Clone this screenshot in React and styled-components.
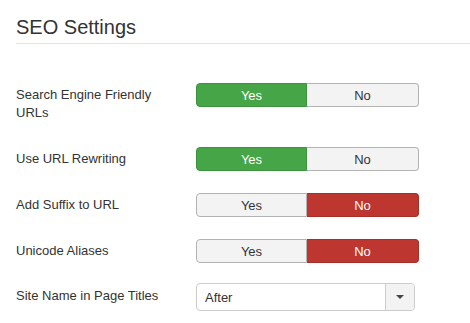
import React from 'react'
import styled, { createGlobalStyle } from 'styled-components'

/*
=============================
styled Components
=============================
*/

const GlobalStyle = createGlobalStyle`
    body {
        margin: 0;
        background: #fff;
        font-family: "Liberation Sans", Arial, sans-serif;
        color: #333;
    }
`
const Page = styled.div`
    padding-left: 16px;
`
const Title = styled.h2`
    margin: 14px 0 0;
    padding-bottom: 3px;
    font-size: 20px;
    line-height: 26px;
    font-weight: 400;
    color: #333;
    border-bottom: 1px solid #e3e3e3;
`
const Form = styled.div`
    display: flex;
    flex-direction: column;
    gap: 22px;
    margin-top: 39px;
`
const Row = styled.div`
    display: flex;
    align-items: flex-start;
    margin-top: ${p => p.$shift || 0}px;
`
const Label = styled.div`
    width: 160px;
    margin-right: 20px;
    flex: none;
    font-size: 13px;
    line-height: 18px;
    padding: ${p => p.$top || 3}px 0 3px;
    color: #333;
`
const Toggle = styled.div`
    display: grid;
    grid-template-columns: 111px 112px;
    height: 24px;
`
const Choice = styled.div`
    display: flex;
    align-items: center;
    justify-content: center;
    font-size: 13px;
    color: ${p => (p.$on ? '#fff' : '#333')};
    background: ${p => (p.$on ? p.$color : '#f3f3f3')};
    border: 1px solid ${p => (p.$on ? p.$edge : '#b3b3b3')};
    border-left-width: ${p => (p.$first ? 1 : 0)}px;
    border-radius: ${p => (p.$first ? '4px 0 0 4px' : '0 4px 4px 0')};
`
const Select = styled.div`
    display: flex;
    width: 219px;
    height: 28px;
    box-sizing: border-box;
    border: 1px solid #cccccc;
    border-radius: 4px;
    overflow: hidden;
`
const SelectValue = styled.div`
    flex: 1;
    display: flex;
    align-items: center;
    padding-left: 8px;
    font-size: 13px;
    color: #333;
`
const Caret = styled.div`
    width: 28px;
    display: flex;
    align-items: center;
    justify-content: center;
    background: #f3f3f3;
    border-left: 1px solid #cccccc;
    &::after {
        content: '';
        border-left: 4px solid transparent;
        border-right: 4px solid transparent;
        border-top: 4px solid #444;
    }
`

/*
=============================
Component
=============================
*/

const fields = [
    { label: 'Search Engine Friendly URLs', value: true },
    { label: 'Use URL Rewriting', value: true },
    { label: 'Add Suffix to URL', value: false },
    { label: 'Unicode Aliases', value: false },
]

function YesNo({ value }) {
    return (
        <Toggle>
            <Choice $first $on={value} $color='#46a546' $edge='#3d923d'>Yes</Choice>
            <Choice $on={!value} $color='#bd362f' $edge='#a5302a'>No</Choice>
        </Toggle>
    )
}

function App() {
    return (
        <Page>
            <GlobalStyle />
            <Title>SEO Settings</Title>
            <Form>
                {fields.map(f => (
                    <Row key={f.label}>
                        <Label>{f.label}</Label>
                        <YesNo value={f.value} />
                    </Row>
                ))}
                <Row $shift={-2}>
                    <Label $top={4}>Site Name in Page Titles</Label>
                    <Select>
                        <SelectValue>After</SelectValue>
                        <Caret />
                    </Select>
                </Row>
            </Form>
        </Page>
    )
}

export default App
